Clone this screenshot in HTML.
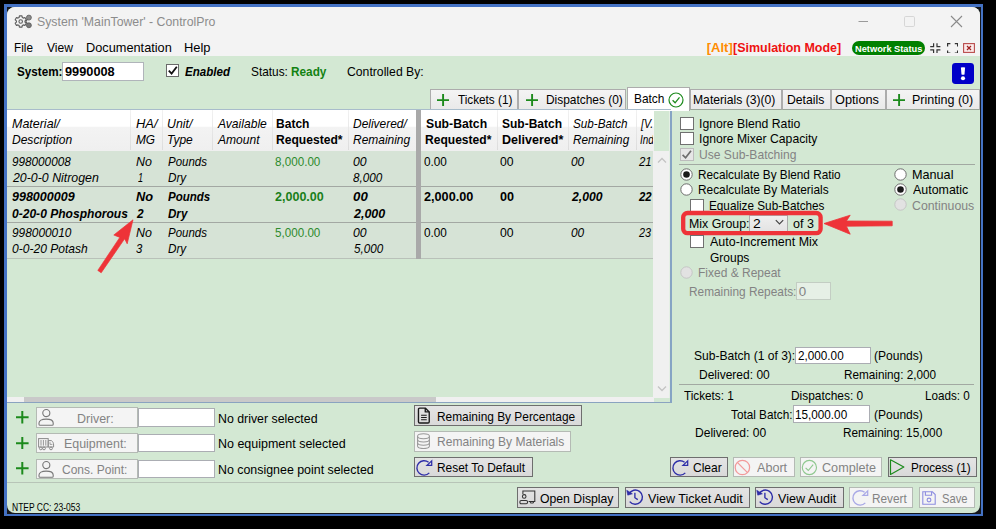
<!DOCTYPE html>
<html><head><meta charset="utf-8"><title>ControlPro</title>
<style>
html,body{margin:0;padding:0;}
body{width:996px;height:529px;background:#000;overflow:hidden;position:relative;font-family:"Liberation Sans",sans-serif;}
.b{position:absolute;box-sizing:border-box;}
.t{position:absolute;white-space:nowrap;line-height:20px;transform-origin:0 50%;color:#000;}
</style></head><body>
<div class="b" style="left:4px;top:4px;width:979px;height:512px;background:#4472c4;"></div>
<div class="b" style="left:6.5px;top:6.5px;width:974px;height:507px;background:#15171c;"></div>
<div class="b" id="win" style="left:7px;top:7px;width:973px;height:506px;background:#d3e8d3;border-radius:8px;overflow:hidden;"></div>
<div class="b" style="left:7px;top:7px;width:973px;height:49px;background:#f3f3f3;border-radius:8px 8px 0 0;"></div>
<svg class="b" style="left:14px;top:14px;" width="20" height="16" viewBox="0 0 20 16">
<g fill="none" stroke="#5e5e5e" stroke-linejoin="round">
<path d="M5.41 1.90 L7.99 1.90 L8.26 3.44 L9.44 4.12 L10.91 3.58 L12.20 5.82 L11.00 6.82 L11.00 8.18 L12.20 9.18 L10.91 11.42 L9.44 10.88 L8.26 11.56 L7.99 13.10 L5.41 13.10 L5.14 11.56 L3.96 10.88 L2.49 11.42 L1.20 9.18 L2.40 8.18 L2.40 6.82 L1.20 5.82 L2.49 3.58 L3.96 4.12 L5.14 3.44 Z" stroke-width="1.15"/>
<circle cx="6.7" cy="7.5" r="1.75" stroke-width="1.1"/>
<path d="M11.6 7.5 L13.4 5.3 M11.6 7.5 L13.4 9.7" stroke-width="1.2"/>
</g>
<circle cx="14.9" cy="3.6" r="2.45" fill="#8c8c8c" stroke="#5e5e5e" stroke-width=".9"/>
<circle cx="14.9" cy="11.3" r="2.45" fill="#7a7a7a" stroke="#5e5e5e" stroke-width=".9"/>
</svg>
<span class="t" style="left:36.88px;top:12px;font-size:12.4px;color:#8c8c8c;transform:scaleX(0.9934);">System &#x27;MainTower&#x27; - ControlPro</span>
<svg class="b" style="left:856px;top:14px;" width="110" height="14" viewBox="0 0 110 14">
<path d="M2.5 7.5 H12" stroke="#9a9a9a" stroke-width="1" fill="none"/>
<rect x="48.5" y="2.5" width="10" height="10" rx="1.2" fill="none" stroke="#d6d6d6" stroke-width="1"/>
<path d="M95 2 L106 13 M106 2 L95 13" stroke="#8a8a8a" stroke-width="1.1" fill="none"/>
</svg>
<span class="t" style="left:13.56px;top:38px;font-size:12.4px;transform:scaleX(0.9472);">File</span>
<span class="t" style="left:47.00px;top:38px;font-size:12.4px;transform:scaleX(0.9752);">View</span>
<span class="t" style="left:85.98px;top:38px;font-size:12.4px;transform:scaleX(1.0295);">Documentation</span>
<span class="t" style="left:183.97px;top:38px;font-size:12.4px;transform:scaleX(1.0392);">Help</span>
<span class="t" style="left:706.75px;top:38px;font-size:13px;font-weight:bold;color:#ff8c00;">[Alt]</span>
<span class="t" style="left:733.08px;top:38px;font-size:13px;font-weight:bold;color:#ee1111;transform:scaleX(0.9606);">[Simulation Mode]</span>
<div class="b" style="left:852px;top:40.6px;width:73px;height:14px;background:#008000;border-radius:7px;"></div>
<span class="t" style="left:854.95px;top:39px;font-size:9px;font-weight:bold;color:#fff;transform:scaleX(1.0290);">Network Status</span>
<svg class="b" style="left:930.4px;top:42.8px;" width="10.6" height="10.4" viewBox="0 0 10.6 10.4"><path d="M3.6 0.2 V3.6 H0.2 M7 0.2 V3.6 H10.4 M3.6 10.2 V6.8 H0.2 M7 10.2 V6.8 H10.4" fill="none" stroke="#333" stroke-width="1.2"/></svg>
<svg class="b" style="left:946.8px;top:42.6px;" width="11.2" height="10.8" viewBox="0 0 11.2 10.8"><path d="M0.6 3.4 V0.6 H3.4 M7.8 0.6 H10.6 V3.4 M0.6 7.4 V10.2 H3.4 M7.8 10.2 H10.6 V7.4" fill="none" stroke="#333" stroke-width="1.2"/></svg>
<svg class="b" style="left:962.6px;top:43.2px;" width="12" height="10" viewBox="0 0 12 10"><rect x=".6" y=".6" width="10.8" height="8.8" fill="#fbeaea" stroke="#b84a4a" stroke-width="1.1"/><path d="M4 3 L8 7 M8 3 L4 7" stroke="#a02020" stroke-width="1.2"/></svg>
<span class="t" style="left:16.65px;top:62px;font-size:13.33px;font-weight:bold;transform:scaleX(0.8756);">System:</span>
<div class="b" style="left:62px;top:62px;width:82px;height:18.6px;background:#fff;border:1px solid #b0b4ba;"></div>
<span class="t" style="left:64.62px;top:62px;font-size:13.33px;font-weight:bold;transform:scaleX(0.9573);">9990008</span>
<div class="b" style="left:165.6px;top:64.4px;width:13.6px;height:13px;background:#fff;border:1px solid #6a6a6a;"></div>
<svg class="b" style="left:166px;top:64px;" width="14" height="13" viewBox="0 0 14 13"><path d="M2.8 6.6 L5.6 9.6 L10.8 2.8" fill="none" stroke="#111" stroke-width="1.8"/></svg>
<span class="t" style="left:184.77px;top:62px;font-size:13.33px;font-weight:bold;font-style:italic;transform:scaleX(0.8678);">Enabled</span>
<span class="t" style="left:250.71px;top:62px;font-size:13.33px;transform:scaleX(0.8891);">Status:</span>
<span class="t" style="left:291.17px;top:62px;font-size:13.33px;font-weight:bold;color:#128212;transform:scaleX(0.8859);">Ready</span>
<span class="t" style="left:347.39px;top:62px;font-size:13.33px;transform:scaleX(0.9164);">Controlled By:</span>
<div class="b" style="left:952px;top:62.6px;width:21.7px;height:21px;background:#0000c8;border-radius:3.4px;"></div>
<svg class="b" style="left:958px;top:66px;" width="10" height="16" viewBox="0 0 10 16"><path d="M2.9 1.6 Q5 0.7 7.1 1.6 L6.5 8.6 Q5 9.1 3.5 8.6 Z" fill="#fff"/><circle cx="5" cy="12.2" r="2.05" fill="#fff"/></svg>
<div class="b" style="left:430.4px;top:89.3px;width:87.60000000000002px;height:20.4px;background:linear-gradient(#f4f4f4,#e9e9e9);border:1px solid #acacac;border-bottom-color:#9aa79a;"></div>
<div class="b" style="left:518.4px;top:89.3px;width:107.80000000000007px;height:20.4px;background:linear-gradient(#f4f4f4,#e9e9e9);border:1px solid #acacac;border-bottom-color:#9aa79a;"></div>
<div class="b" style="left:689.5px;top:89.3px;width:92.10000000000002px;height:20.4px;background:linear-gradient(#f4f4f4,#e9e9e9);border:1px solid #acacac;border-bottom-color:#9aa79a;"></div>
<div class="b" style="left:781.8px;top:89.3px;width:48.80000000000007px;height:20.4px;background:linear-gradient(#f4f4f4,#e9e9e9);border:1px solid #acacac;border-bottom-color:#9aa79a;"></div>
<div class="b" style="left:830.6px;top:89.3px;width:55.19999999999993px;height:20.4px;background:linear-gradient(#f4f4f4,#e9e9e9);border:1px solid #acacac;border-bottom-color:#9aa79a;"></div>
<div class="b" style="left:885.8px;top:89.3px;width:93.80000000000007px;height:20.4px;background:linear-gradient(#f4f4f4,#e9e9e9);border:1px solid #acacac;border-bottom-color:#9aa79a;"></div>
<div class="b" style="left:626.8px;top:86.8px;width:62.80000000000007px;height:24px;background:#fff;border:1px solid #acacac;border-bottom:none;"></div>
<svg class="b" style="left:437.2px;top:93.80000000000001px;" width="12.2" height="12.2" viewBox="0 0 12.2 12.2"><path d="M6.1 0 V12.2 M0 6.1 H12.2" stroke="#1c8a1c" stroke-width="1.9" fill="none"/></svg>
<span class="t" style="left:457.77px;top:90px;font-size:13.33px;transform:scaleX(0.8804);">Tickets (1)</span>
<svg class="b" style="left:525.6px;top:93.80000000000001px;" width="12.2" height="12.2" viewBox="0 0 12.2 12.2"><path d="M6.1 0 V12.2 M0 6.1 H12.2" stroke="#1c8a1c" stroke-width="1.9" fill="none"/></svg>
<span class="t" style="left:545.55px;top:90px;font-size:13.33px;transform:scaleX(0.8943);">Dispatches (0)</span>
<span class="t" style="left:634.05px;top:89px;font-size:13.33px;transform:scaleX(0.8934);">Batch</span>
<svg class="b" style="left:667.5px;top:91.8px;" width="16" height="16" viewBox="0 0 16 16"><circle cx="8" cy="8" r="7" fill="none" stroke="#1c8a1c" stroke-width="1.2"/><path d="M4.6 8.3 L7.1 10.8 L11.5 5.4" fill="none" stroke="#1c8a1c" stroke-width="1.3"/></svg>
<span class="t" style="left:693.33px;top:90px;font-size:13.33px;transform:scaleX(0.9117);">Materials (3)(0)</span>
<span class="t" style="left:787.02px;top:90px;font-size:13.33px;transform:scaleX(0.9155);">Details</span>
<span class="t" style="left:835.36px;top:90px;font-size:13.33px;transform:scaleX(0.9572);">Options</span>
<svg class="b" style="left:892.6px;top:93.80000000000001px;" width="12.2" height="12.2" viewBox="0 0 12.2 12.2"><path d="M6.1 0 V12.2 M0 6.1 H12.2" stroke="#1c8a1c" stroke-width="1.9" fill="none"/></svg>
<span class="t" style="left:912.00px;top:90px;font-size:13.33px;transform:scaleX(0.9397);">Printing (0)</span>
<div class="b" style="left:7px;top:109px;width:664px;height:1px;background:#a8bccb;"></div>
<div class="b" style="left:7px;top:110px;width:646.5px;height:40.5px;background:linear-gradient(#ffffff 0,#ffffff 40%,#f3f3f3 41%,#efefef 100%);"></div>
<div class="b" style="left:130.0px;top:110px;width:1px;height:40px;background:linear-gradient(#f2f2f2,#dcdcdc);"></div>
<div class="b" style="left:162.1px;top:110px;width:1px;height:40px;background:linear-gradient(#f2f2f2,#dcdcdc);"></div>
<div class="b" style="left:212.2px;top:110px;width:1px;height:40px;background:linear-gradient(#f2f2f2,#dcdcdc);"></div>
<div class="b" style="left:271.8px;top:110px;width:1px;height:40px;background:linear-gradient(#f2f2f2,#dcdcdc);"></div>
<div class="b" style="left:347.5px;top:110px;width:1px;height:40px;background:linear-gradient(#f2f2f2,#dcdcdc);"></div>
<div class="b" style="left:497.2px;top:110px;width:1px;height:40px;background:linear-gradient(#f2f2f2,#dcdcdc);"></div>
<div class="b" style="left:568.3px;top:110px;width:1px;height:40px;background:linear-gradient(#f2f2f2,#dcdcdc);"></div>
<div class="b" style="left:635.8px;top:110px;width:1px;height:40px;background:linear-gradient(#f2f2f2,#dcdcdc);"></div>
<div class="b" style="left:7px;top:150.5px;width:646.5px;height:108px;background:#d6e3d6;"></div>
<div class="b" style="left:7px;top:185.5px;width:646.5px;height:1.2px;background:#a3a8a3;"></div>
<div class="b" style="left:7px;top:221.5px;width:646.5px;height:1.2px;background:#a3a8a3;"></div>
<div class="b" style="left:7px;top:257.5px;width:646.5px;height:1.2px;background:#b9c1b9;"></div>
<div class="b" style="left:416.2px;top:110px;width:4.4px;height:148.5px;background:#a9a9a9;"></div>
<div class="b" style="left:653px;top:151px;width:17px;height:246.5px;background:#f0f0f0;"></div>
<svg class="b" style="left:657px;top:156px;" width="10" height="8" viewBox="0 0 10 8"><path d="M1 6.5 L5 2.5 L9 6.5" fill="none" stroke="#c4c4c4" stroke-width="1.3"/></svg>
<svg class="b" style="left:657px;top:384.5px;" width="10" height="8" viewBox="0 0 10 8"><path d="M1 1.5 L5 5.5 L9 1.5" fill="none" stroke="#c4c4c4" stroke-width="1.3"/></svg>
<div class="b" style="left:670.4px;top:110.5px;width:1.6px;height:292px;background:#86a4c4;"></div>
<div class="b" style="left:669.2px;top:110.5px;width:1px;height:287px;background:#e4efe4;"></div>
<div class="b" style="left:7px;top:397px;width:646.5px;height:4.8px;background:#f0f0f0;"></div>
<div class="b" style="left:24px;top:397px;width:412px;height:4.8px;background:#c9c9c9;"></div>
<div class="b" style="left:7px;top:401.6px;width:664px;height:1.2px;background:#8aa3c0;"></div>
<span class="t" style="left:12.13px;top:114px;font-size:13.33px;font-style:italic;transform:scaleX(0.9353);">Material/</span>
<span class="t" style="left:12.14px;top:130px;font-size:13.33px;font-style:italic;transform:scaleX(0.9024);">Description</span>
<span class="t" style="left:135.91px;top:114px;font-size:13.33px;font-style:italic;transform:scaleX(0.9726);">HA/</span>
<span class="t" style="left:135.95px;top:130px;font-size:13.33px;font-style:italic;transform:scaleX(0.8875);">MG</span>
<span class="t" style="left:166.94px;top:114px;font-size:13.33px;font-style:italic;transform:scaleX(0.9241);">Unit/</span>
<span class="t" style="left:166.72px;top:130px;font-size:13.33px;font-style:italic;transform:scaleX(0.8987);">Type</span>
<span class="t" style="left:218.20px;top:114px;font-size:13.33px;font-style:italic;transform:scaleX(0.9058);">Available</span>
<span class="t" style="left:218.20px;top:130px;font-size:13.33px;font-style:italic;transform:scaleX(0.9053);">Amount</span>
<span class="t" style="left:276.46px;top:114px;font-size:13.33px;font-weight:bold;transform:scaleX(0.9031);">Batch</span>
<span class="t" style="left:276.45px;top:130px;font-size:13.33px;font-weight:bold;transform:scaleX(0.9077);">Requested*</span>
<span class="t" style="left:353.24px;top:114px;font-size:13.33px;font-style:italic;transform:scaleX(0.8969);">Delivered/</span>
<span class="t" style="left:353.24px;top:130px;font-size:13.33px;font-style:italic;transform:scaleX(0.8974);">Remaining</span>
<span class="t" style="left:425.63px;top:114px;font-size:13.33px;font-weight:bold;transform:scaleX(0.9167);">Sub-Batch</span>
<span class="t" style="left:425.16px;top:130px;font-size:13.33px;font-weight:bold;transform:scaleX(0.9049);">Requested*</span>
<span class="t" style="left:502.44px;top:114px;font-size:13.33px;font-weight:bold;transform:scaleX(0.9014);">Sub-Batch</span>
<span class="t" style="left:501.92px;top:130px;font-size:13.33px;font-weight:bold;transform:scaleX(0.9401);">Delivered*</span>
<span class="t" style="left:573.25px;top:114px;font-size:13.33px;font-style:italic;transform:scaleX(0.8777);">Sub-Batch</span>
<span class="t" style="left:573.25px;top:130px;font-size:13.33px;font-style:italic;transform:scaleX(0.8815);">Remaining</span>
<div class="b" style="left:636.8px;top:110px;width:16.7px;height:148px;overflow:hidden;">
<span class="t" style="left:3.91px;top:4px;font-size:13.33px;font-style:italic;transform:scaleX(0.7985);">[V.I.]</span>
<span class="t" style="left:3.60px;top:20px;font-size:13.33px;font-style:italic;transform:scaleX(0.7440);">Index</span>
<span class="t" style="left:2.61px;top:42px;font-size:13.33px;font-style:italic;transform:scaleX(0.8584);">21</span>
<span class="t" style="left:2.03px;top:77px;font-size:13.33px;font-weight:bold;font-style:italic;transform:scaleX(0.8564);">22</span>
<span class="t" style="left:2.61px;top:113px;font-size:13.33px;font-style:italic;transform:scaleX(0.8105);">23</span>
</div>
<span class="t" style="left:12.15px;top:152px;font-size:13.33px;font-style:italic;transform:scaleX(0.8800);">998000008</span>
<span class="t" style="left:12.62px;top:168px;font-size:13.33px;font-style:italic;transform:scaleX(0.9271);">20-0-0 Nitrogen</span>
<span class="t" style="left:135.83px;top:152px;font-size:13.33px;font-style:italic;transform:scaleX(0.9347);">No</span>
<span class="t" style="left:137.73px;top:168px;font-size:13.33px;font-style:italic;transform:scaleX(0.6820);">1</span>
<span class="t" style="left:167.66px;top:152px;font-size:13.33px;font-style:italic;transform:scaleX(0.8602);">Pounds</span>
<span class="t" style="left:167.65px;top:168px;font-size:13.33px;font-style:italic;transform:scaleX(0.8784);">Dry</span>
<span class="t" style="left:275.13px;top:152px;font-size:13.33px;color:#2e8b2e;transform:scaleX(0.8739);">8,000.00</span>
<span class="t" style="left:353.31px;top:152px;font-size:13.33px;font-style:italic;transform:scaleX(0.9185);">00</span>
<span class="t" style="left:353.45px;top:168px;font-size:13.33px;font-style:italic;transform:scaleX(0.8777);">8,000</span>
<span class="t" style="left:424.03px;top:152px;font-size:13.33px;transform:scaleX(0.8826);">0.00</span>
<span class="t" style="left:500.31px;top:152px;font-size:13.33px;transform:scaleX(0.9161);">00</span>
<span class="t" style="left:571.13px;top:152px;font-size:13.33px;font-style:italic;transform:scaleX(0.8904);">00</span>
<span class="t" style="left:12.25px;top:187px;font-size:13.33px;font-weight:bold;font-style:italic;transform:scaleX(0.9385);">998000009</span>
<span class="t" style="left:12.02px;top:204px;font-size:13.33px;font-weight:bold;font-style:italic;transform:scaleX(0.9043);">0-20-0 Phosphorous</span>
<span class="t" style="left:135.94px;top:187px;font-size:13.33px;font-weight:bold;font-style:italic;transform:scaleX(0.9612);">No</span>
<span class="t" style="left:136.64px;top:204px;font-size:13.33px;font-weight:bold;font-style:italic;transform:scaleX(0.8950);">2</span>
<span class="t" style="left:167.77px;top:187px;font-size:13.33px;font-weight:bold;font-style:italic;transform:scaleX(0.8645);">Pounds</span>
<span class="t" style="left:167.77px;top:204px;font-size:13.33px;font-weight:bold;font-style:italic;transform:scaleX(0.8700);">Dry</span>
<span class="t" style="left:275.22px;top:187px;font-size:13.33px;font-weight:bold;color:#1a7f1a;transform:scaleX(0.9402);">2,000.00</span>
<span class="t" style="left:353.27px;top:187px;font-size:13.33px;font-weight:bold;font-style:italic;transform:scaleX(0.9956);">00</span>
<span class="t" style="left:354.05px;top:204px;font-size:13.33px;font-weight:bold;font-style:italic;transform:scaleX(0.9377);">2,000</span>
<span class="t" style="left:424.12px;top:187px;font-size:13.33px;font-weight:bold;transform:scaleX(0.9500);">2,000.00</span>
<span class="t" style="left:500.30px;top:187px;font-size:13.33px;font-weight:bold;transform:scaleX(0.9449);">00</span>
<span class="t" style="left:571.84px;top:187px;font-size:13.33px;font-weight:bold;font-style:italic;transform:scaleX(0.9139);">2,000</span>
<span class="t" style="left:12.14px;top:223px;font-size:13.33px;font-style:italic;transform:scaleX(0.8906);">998000010</span>
<span class="t" style="left:12.02px;top:239px;font-size:13.33px;font-style:italic;transform:scaleX(0.9051);">0-0-20 Potash</span>
<span class="t" style="left:135.83px;top:223px;font-size:13.33px;font-style:italic;transform:scaleX(0.9347);">No</span>
<span class="t" style="left:136.17px;top:239px;font-size:13.33px;font-style:italic;transform:scaleX(0.8493);">3</span>
<span class="t" style="left:167.66px;top:223px;font-size:13.33px;font-style:italic;transform:scaleX(0.8602);">Pounds</span>
<span class="t" style="left:167.65px;top:239px;font-size:13.33px;font-style:italic;transform:scaleX(0.8784);">Dry</span>
<span class="t" style="left:275.13px;top:223px;font-size:13.33px;color:#2e8b2e;transform:scaleX(0.8739);">5,000.00</span>
<span class="t" style="left:353.31px;top:223px;font-size:13.33px;font-style:italic;transform:scaleX(0.9185);">00</span>
<span class="t" style="left:353.57px;top:239px;font-size:13.33px;font-style:italic;transform:scaleX(0.8742);">5,000</span>
<span class="t" style="left:424.03px;top:223px;font-size:13.33px;transform:scaleX(0.8826);">0.00</span>
<span class="t" style="left:500.31px;top:223px;font-size:13.33px;transform:scaleX(0.9161);">00</span>
<span class="t" style="left:571.13px;top:223px;font-size:13.33px;font-style:italic;transform:scaleX(0.8904);">00</span>
<svg class="b" style="left:90px;top:210px" width="60" height="70" viewBox="90 210 60 70"><path d="M97.8 270.4 L119.8 237.4 L113.8 235.0 L133.0 219.8 L127.2 243.8 L124.6 238.8 L101.2 272.8 Z" fill="#ee3338" stroke="#ee3338" stroke-width="0.7" stroke-linejoin="round"/></svg>
<div class="b" style="left:680.3px;top:116.5px;width:13.6px;height:13px;background:#fff;border:1px solid #707070;"></div>
<span class="t" style="left:699.10px;top:114px;font-size:13.33px;transform:scaleX(0.9175);">Ignore Blend Ratio</span>
<div class="b" style="left:680.3px;top:132px;width:13.6px;height:13px;background:#fff;border:1px solid #707070;"></div>
<span class="t" style="left:699.10px;top:129px;font-size:13.33px;transform:scaleX(0.9136);">Ignore Mixer Capacity</span>
<div class="b" style="left:680.3px;top:147.5px;width:13.6px;height:13px;background:#e6e6e6;border:1px solid #bcbcbc;"></div>
<svg class="b" style="left:680.3px;top:147.5px;" width="14" height="13" viewBox="0 0 14 13"><path d="M2.6 6.8 L5.6 9.8 L11 2.8" fill="none" stroke="#6d6d6d" stroke-width="1.7"/></svg>
<span class="t" style="left:699.03px;top:145px;font-size:13.33px;color:#838383;transform:scaleX(0.9067);">Use Sub-Batching</span>
<div class="b" style="left:679.3px;top:164px;width:295.6px;height:1.2px;background:#a2a9a2;"></div>
<svg class="b" style="left:680px;top:168.3px;" width="13" height="13" viewBox="0 0 13 13"><circle cx="6.5" cy="6.5" r="5.7" fill="#fff" stroke="#666" stroke-width=".95"/><circle cx="6.5" cy="6.5" r="3.3" fill="#1a1a1a"/></svg>
<span class="t" style="left:697.96px;top:165px;font-size:13.33px;transform:scaleX(0.8833);">Recalculate By Blend Ratio</span>
<svg class="b" style="left:680px;top:183.4px;" width="13" height="13" viewBox="0 0 13 13"><circle cx="6.5" cy="6.5" r="5.7" fill="#fff" stroke="#666" stroke-width=".95"/></svg>
<span class="t" style="left:697.95px;top:180px;font-size:13.33px;transform:scaleX(0.8907);">Recalculate By Materials</span>
<svg class="b" style="left:893.6px;top:167.5px;" width="13" height="13" viewBox="0 0 13 13"><circle cx="6.5" cy="6.5" r="5.7" fill="#fff" stroke="#666" stroke-width=".95"/></svg>
<span class="t" style="left:912.09px;top:165px;font-size:13.33px;transform:scaleX(0.9485);">Manual</span>
<svg class="b" style="left:893.6px;top:183.0px;" width="13" height="13" viewBox="0 0 13 13"><circle cx="6.5" cy="6.5" r="5.7" fill="#fff" stroke="#666" stroke-width=".95"/><circle cx="6.5" cy="6.5" r="3.3" fill="#1a1a1a"/></svg>
<span class="t" style="left:913.10px;top:180px;font-size:13.33px;transform:scaleX(0.9318);">Automatic</span>
<svg class="b" style="left:893.6px;top:198.2px;" width="13" height="13" viewBox="0 0 13 13"><circle cx="6.5" cy="6.5" r="5.7" fill="#e2e2e2" stroke="#c4c4c4" stroke-width=".95"/></svg>
<span class="t" style="left:912.48px;top:196px;font-size:13.33px;color:#838383;transform:scaleX(0.9234);">Continuous</span>
<div class="b" style="left:690.2px;top:198.7px;width:13.6px;height:13px;background:#fff;border:1px solid #707070;"></div>
<span class="t" style="left:709.26px;top:196px;font-size:13.33px;transform:scaleX(0.8805);">Equalize Sub-Batches</span>
<span class="t" style="left:689.01px;top:214px;font-size:13.33px;transform:scaleX(0.9282);">Mix Group:</span>
<div class="b" style="left:748.6px;top:215px;width:39px;height:16.6px;background:linear-gradient(#efefef,#e3e3e3);border:1px solid #acacac;"></div>
<span class="t" style="left:752.90px;top:214px;font-size:13.33px;transform:scaleX(1.0437);">2</span>
<svg class="b" style="left:775.4px;top:219px;" width="9" height="7" viewBox="0 0 9 7"><path d="M0.8 1.2 L4.5 4.9 L8.2 1.2" fill="none" stroke="#444" stroke-width="1.2"/></svg>
<span class="t" style="left:793.10px;top:214px;font-size:13.33px;transform:scaleX(0.9401);">of 3</span>
<svg class="b" style="left:676px;top:206px" width="150" height="34" viewBox="676 206 150 34"><rect x="683.2" y="213.0" width="137.4" height="20.2" rx="4.3" fill="none" stroke="#ee3338" stroke-width="4.3"/></svg>
<svg class="b" style="left:820px;top:208px" width="80" height="30" viewBox="820 208 80 30"><path d="M824.0 223.5 L850.2 215.2 L846.4 221.0 L892.2 221.2 L892.2 225.8 L846.4 226.2 L850.2 234.2 Z" fill="#ee3338" stroke="#ee3338" stroke-width="0.8" stroke-linejoin="round"/></svg>
<div class="b" style="left:690.2px;top:234.6px;width:13.6px;height:13px;background:#fff;border:1px solid #707070;"></div>
<span class="t" style="left:710.20px;top:232px;font-size:13.33px;transform:scaleX(0.9347);">Auto-Increment Mix</span>
<span class="t" style="left:709.60px;top:248px;font-size:13.33px;transform:scaleX(0.9002);">Groups</span>
<svg class="b" style="left:680px;top:266.3px;" width="13" height="13" viewBox="0 0 13 13"><circle cx="6.5" cy="6.5" r="5.7" fill="#e2e2e2" stroke="#c4c4c4" stroke-width=".95"/></svg>
<span class="t" style="left:697.94px;top:263px;font-size:13.33px;color:#838383;transform:scaleX(0.9002);">Fixed &amp; Repeat</span>
<span class="t" style="left:689.05px;top:282px;font-size:13.33px;color:#838383;transform:scaleX(0.8894);">Remaining Repeats:</span>
<div class="b" style="left:796px;top:282px;width:35.2px;height:18px;background:#e6f0e6;border:1px solid #c3cdc3;"></div>
<span class="t" style="left:798.87px;top:282px;font-size:13.33px;color:#838383;">0</span>
<span class="t" style="left:693.80px;top:346px;font-size:13.33px;transform:scaleX(0.9048);">Sub-Batch (1 of 3):</span>
<div class="b" style="left:794.9px;top:346.6px;width:76.4px;height:17.6px;background:#fff;border:1px solid #abadb3;"></div>
<span class="t" style="left:797.51px;top:346px;font-size:13.33px;transform:scaleX(0.8801);">2,000.00</span>
<span class="t" style="left:873.78px;top:346px;font-size:13.33px;transform:scaleX(0.9029);">(Pounds)</span>
<span class="t" style="left:699.24px;top:365px;font-size:13.33px;transform:scaleX(0.9007);">Delivered: 00</span>
<span class="t" style="left:844.16px;top:365px;font-size:13.33px;transform:scaleX(0.8814);">Remaining: 2,000</span>
<div class="b" style="left:678.7px;top:383.5px;width:295.8px;height:1.2px;background:#a2a9a2;"></div>
<span class="t" style="left:683.67px;top:386px;font-size:13.33px;transform:scaleX(0.8794);">Tickets: 1</span>
<span class="t" style="left:790.65px;top:386px;font-size:13.33px;transform:scaleX(0.8942);">Dispatches: 0</span>
<span class="t" style="left:925.07px;top:386px;font-size:13.33px;transform:scaleX(0.8752);">Loads: 0</span>
<span class="t" style="left:731.16px;top:405px;font-size:13.33px;transform:scaleX(0.8821);">Total Batch:</span>
<div class="b" style="left:792.9px;top:405px;width:76.8px;height:18px;background:#fff;border:1px solid #abadb3;"></div>
<span class="t" style="left:795.38px;top:405px;font-size:13.33px;transform:scaleX(0.8798);">15,000.00</span>
<span class="t" style="left:873.78px;top:405px;font-size:13.33px;transform:scaleX(0.9029);">(Pounds)</span>
<span class="t" style="left:695.23px;top:423px;font-size:13.33px;transform:scaleX(0.9059);">Delivered: 00</span>
<span class="t" style="left:842.85px;top:423px;font-size:13.33px;transform:scaleX(0.8870);">Remaining: 15,000</span>
<svg class="b" style="left:16px;top:411.2px;" width="12.6" height="12.6" viewBox="0 0 12.6 12.6"><path d="M6.3 0 V12.6 M0 6.3 H12.6" stroke="#1c8a1c" stroke-width="2" fill="none"/></svg>
<div class="b" style="left:36px;top:407px;width:101.6px;height:21px;background:#f4f4f4;border:1px solid #b4bab4;"></div>
<svg class="b" style="left:38px;top:407px;" width="17" height="20" viewBox="0 0 17 20"><g fill="none" stroke="#777" stroke-width="1.1"><circle cx="8.3" cy="6.1" r="3.55"/><path d="M1 17.2 V16 C1 13.5 3.7 12.1 8.1 12.1 C12.5 12.1 15.2 13.5 15.2 16 V17.2 Q15.2 18.3 14.1 18.3 H2.1 Q1 18.3 1 17.2 Z"/></g></svg>
<span class="t" style="left:77.30px;top:409px;font-size:13.33px;color:#838383;transform:scaleX(0.9364);">Driver:</span>
<div class="b" style="left:138px;top:408.4px;width:76.6px;height:18.6px;background:#fff;border:1px solid #abadb3;"></div>
<span class="t" style="left:217.51px;top:409px;font-size:13.33px;transform:scaleX(0.9266);">No driver selected</span>
<svg class="b" style="left:16px;top:436.7px;" width="12.6" height="12.6" viewBox="0 0 12.6 12.6"><path d="M6.3 0 V12.6 M0 6.3 H12.6" stroke="#1c8a1c" stroke-width="2" fill="none"/></svg>
<div class="b" style="left:36px;top:433px;width:101.6px;height:20px;background:#f4f4f4;border:1px solid #b4bab4;"></div>
<svg class="b" style="left:37.6px;top:436.6px;" width="17" height="14" viewBox="0 0 17 14"><g fill="none" stroke="#8b8b8b" stroke-width="1"><rect x=".6" y="1.6" width="9.6" height="8.4"/><path d="M3 3 V8.6 M5.4 3 V8.6 M7.8 3 V8.6" stroke-width=".9"/><path d="M10.2 3.6 H13.4 C15 4.6 15.6 6.2 15.6 8 V10 H10.2 Z"/><path d="M12 5.2 V7.4 H14.4" stroke-width=".8"/><circle cx="2.8" cy="11.4" r="1.4"/><circle cx="6" cy="11.4" r="1.4"/><circle cx="13" cy="11.4" r="1.4"/></g></svg>
<span class="t" style="left:63.81px;top:434px;font-size:13.33px;color:#838383;transform:scaleX(0.9312);">Equipment:</span>
<div class="b" style="left:138px;top:434.4px;width:76.6px;height:17.6px;background:#fff;border:1px solid #abadb3;"></div>
<span class="t" style="left:217.50px;top:434px;font-size:13.33px;transform:scaleX(0.9362);">No equipment selected</span>
<svg class="b" style="left:16px;top:462.09999999999997px;" width="12.6" height="12.6" viewBox="0 0 12.6 12.6"><path d="M6.3 0 V12.6 M0 6.3 H12.6" stroke="#1c8a1c" stroke-width="2" fill="none"/></svg>
<div class="b" style="left:36px;top:458.6px;width:101.6px;height:20.399999999999977px;background:#f4f4f4;border:1px solid #b4bab4;"></div>
<svg class="b" style="left:38px;top:458.6px;" width="17" height="20" viewBox="0 0 17 20"><g fill="none" stroke="#777" stroke-width="1.1"><circle cx="8.3" cy="6.1" r="3.55"/><path d="M1 17.2 V16 C1 13.5 3.7 12.1 8.1 12.1 C12.5 12.1 15.2 13.5 15.2 16 V17.2 Q15.2 18.3 14.1 18.3 H2.1 Q1 18.3 1 17.2 Z"/></g></svg>
<span class="t" style="left:62.40px;top:460px;font-size:13.33px;color:#838383;transform:scaleX(0.9014);">Cons. Point:</span>
<div class="b" style="left:138px;top:460.0px;width:76.6px;height:17.99999999999998px;background:#fff;border:1px solid #abadb3;"></div>
<span class="t" style="left:217.51px;top:460px;font-size:13.33px;transform:scaleX(0.9296);">No consignee point selected</span>
<div class="b" style="left:413.8px;top:405px;width:168.2px;height:21px;background:linear-gradient(#e4e4e4,#d9d9d9);border:1px solid #6e6e6e;"></div>
<svg class="b" style="left:417px;top:407px;" width="13.6" height="17" viewBox="0 0 13 16"><g fill="none" stroke="#1a1a1a" stroke-width="1.3" stroke-linejoin="round"><path d="M2.6 .9 H7.9 L11.7 4.6 V14 Q11.7 15.2 10.5 15.2 H2.6 Q1.4 15.2 1.4 14 V2.1 Q1.4 .9 2.6 .9 Z"/><path d="M7.9 .9 V4.6 H11.7"/><path d="M3.9 7.7 H9.3 M3.9 9.9 H9.3 M3.9 12.1 H9.3" stroke-width="1.05"/></g></svg>
<span class="t" style="left:436.75px;top:407px;font-size:13.33px;transform:scaleX(0.8925);">Remaining By Percentage</span>
<div class="b" style="left:413.8px;top:431px;width:157.59999999999997px;height:21px;background:#f4f4f4;border:1px solid #b4bab4;"></div>
<svg class="b" style="left:416.4px;top:432.8px;" width="15" height="16.6" viewBox="0 0 14 16.2"><g fill="none" stroke="#9a9a9a" stroke-width="1"><ellipse cx="7" cy="3.2" rx="5.8" ry="2.4"/><path d="M1.2 3.2 V12.8 C1.2 14.2 3.8 15.2 7 15.2 C10.2 15.2 12.8 14.2 12.8 12.8 V3.2"/><path d="M1.2 6.4 C1.2 7.8 3.8 8.8 7 8.8 C10.2 8.8 12.8 7.8 12.8 6.4 M1.2 9.6 C1.2 11 3.8 12 7 12 C10.2 12 12.8 11 12.8 9.6"/></g></svg>
<span class="t" style="left:436.74px;top:432px;font-size:13.33px;color:#838383;transform:scaleX(0.9045);">Remaining By Materials</span>
<div class="b" style="left:413.8px;top:457px;width:119.19999999999999px;height:20px;background:linear-gradient(#e4e4e4,#d9d9d9);border:1px solid #6e6e6e;"></div>
<svg class="b" style="left:414.6px;top:458.6px;" width="18" height="18" viewBox="0 0 18 18"><g fill="none" stroke="#2e2ea8" stroke-width="1.35"><path d="M13.6 3.3 A7.2 7.2 0 1 0 14.3 13.9"/><path d="M16.7 1.9 V6.3 H12 Z" stroke-width="1.25" stroke-linejoin="miter"/></g></svg>
<span class="t" style="left:436.75px;top:458px;font-size:13.33px;transform:scaleX(0.8953);">Reset To Default</span>
<div class="b" style="left:7px;top:482.2px;width:973px;height:1.2px;background:#b7c4b7;"></div>
<div class="b" style="left:670px;top:457px;width:57.799999999999955px;height:20px;background:linear-gradient(#e4e4e4,#d9d9d9);border:1px solid #6e6e6e;"></div>
<svg class="b" style="left:671px;top:458.6px;" width="18" height="18" viewBox="0 0 18 18"><g fill="none" stroke="#2e2ea8" stroke-width="1.35"><path d="M13.6 3.3 A7.2 7.2 0 1 0 14.3 13.9"/><path d="M16.7 1.9 V6.3 H12 Z" stroke-width="1.25" stroke-linejoin="miter"/></g></svg>
<span class="t" style="left:693.00px;top:458px;font-size:13.33px;transform:scaleX(0.9015);">Clear</span>
<div class="b" style="left:733.2px;top:457px;width:61.799999999999955px;height:20px;background:#f4f4f4;border:1px solid #b4bab4;"></div>
<svg class="b" style="left:734.4px;top:458.6px;" width="17" height="17" viewBox="0 0 17 17"><circle cx="8.4" cy="8.5" r="7.2" fill="none" stroke="#f29a9a" stroke-width="1.25"/><path d="M3.3 3.4 L13.5 13.6" stroke="#f29a9a" stroke-width="1.25"/></svg>
<span class="t" style="left:757.00px;top:458px;font-size:13.33px;color:#838383;transform:scaleX(0.9456);">Abort</span>
<div class="b" style="left:800px;top:457px;width:82.39999999999998px;height:20px;background:#f4f4f4;border:1px solid #b4bab4;"></div>
<svg class="b" style="left:801.4px;top:458.6px;" width="17" height="17" viewBox="0 0 17 17"><circle cx="8.4" cy="8.5" r="7.1" fill="none" stroke="#8fc88f" stroke-width="1.15"/><path d="M4.6 8.8 L7.3 11.5 L12.2 5.6" fill="none" stroke="#8fc88f" stroke-width="1.15"/></svg>
<span class="t" style="left:822.17px;top:458px;font-size:13.33px;color:#838383;transform:scaleX(0.9476);">Complete</span>
<div class="b" style="left:888px;top:457px;width:88.60000000000002px;height:20px;background:linear-gradient(#e4e4e4,#d9d9d9);border:1px solid #6e6e6e;"></div>
<svg class="b" style="left:889px;top:459px;" width="16" height="16" viewBox="0 0 16 16"><path d="M1.5 0.8 L14.8 8 L1.5 15.4 Z" fill="none" stroke="#1c8a1c" stroke-width="1.2" stroke-linejoin="round"/></svg>
<span class="t" style="left:910.67px;top:458px;font-size:13.33px;transform:scaleX(0.8755);">Process (1)</span>
<div class="b" style="left:517px;top:487px;width:101.79999999999995px;height:21px;background:linear-gradient(#e4e4e4,#d9d9d9);border:1px solid #6e6e6e;"></div>
<svg class="b" style="left:519.2px;top:489.8px;" width="17" height="15" viewBox="0 0 17 15"><g fill="none" stroke="#333" stroke-width="1.05"><path d="M3.9 3.9 V1 H15.8 V11.4 H9.6"/><path d="M11.4 11.4 V13 H14.4 V11.4" stroke-width=".95"/><circle cx="5.2" cy="6.4" r="1.8"/><rect x=".9" y="10.4" width="7.6" height="3.3" rx="1.3"/></g></svg>
<span class="t" style="left:539.59px;top:489px;font-size:13.33px;transform:scaleX(0.9179);">Open Display</span>
<div class="b" style="left:624.7px;top:487px;width:124.89999999999998px;height:21px;background:linear-gradient(#e4e4e4,#d9d9d9);border:1px solid #6e6e6e;"></div>
<svg class="b" style="left:626px;top:488.4px;" width="18.6" height="18.6" viewBox="0 0 18 18"><g fill="none" stroke="#2e2ea8" stroke-width="1.35"><path d="M2.9 5.6 A6.9 6.9 0 1 1 3.6 13.2"/><path d="M.7 2.2 L1.7 6.9 L6.2 5.6 Z" fill="#2e2ea8" stroke-width=".6"/><path d="M8.6 4.6 V9.4 L11.4 11.2" stroke-width="1.3"/></g></svg>
<span class="t" style="left:648.40px;top:489px;font-size:13.33px;transform:scaleX(0.9425);">View Ticket Audit</span>
<div class="b" style="left:755px;top:487px;width:88.5px;height:21px;background:linear-gradient(#e4e4e4,#d9d9d9);border:1px solid #6e6e6e;"></div>
<svg class="b" style="left:756.2px;top:488.4px;" width="18.6" height="18.6" viewBox="0 0 18 18"><g fill="none" stroke="#2e2ea8" stroke-width="1.35"><path d="M2.9 5.6 A6.9 6.9 0 1 1 3.6 13.2"/><path d="M.7 2.2 L1.7 6.9 L6.2 5.6 Z" fill="#2e2ea8" stroke-width=".6"/><path d="M8.6 4.6 V9.4 L11.4 11.2" stroke-width="1.3"/></g></svg>
<span class="t" style="left:778.40px;top:489px;font-size:13.33px;transform:scaleX(0.9410);">View Audit</span>
<div class="b" style="left:849.2px;top:487px;width:63.59999999999991px;height:21px;background:#f4f4f4;border:1px solid #b4bab4;"></div>
<svg class="b" style="left:850.6px;top:488.6px;" width="18" height="18" viewBox="0 0 18 18"><g fill="none" stroke="#a9a9e6" stroke-width="1.35"><path d="M13.6 3.3 A7.2 7.2 0 1 0 14.3 13.9"/><path d="M16.7 1.9 V6.3 H12 Z" stroke-width="1.25" stroke-linejoin="miter"/></g></svg>
<span class="t" style="left:871.85px;top:489px;font-size:13.33px;color:#838383;transform:scaleX(0.8866);">Revert</span>
<div class="b" style="left:918.6px;top:487px;width:56.19999999999993px;height:21px;background:#f4f4f4;border:1px solid #b4bab4;"></div>
<svg class="b" style="left:921.8px;top:490.6px;" width="14" height="14" viewBox="0 0 14 14"><g fill="none" stroke="#8d8de0" stroke-width="1.1"><path d="M.8 .8 H10.4 L13.2 3.6 V13.2 H.8 Z"/><path d="M3.4 .8 V4.2 H9.6 V.8"/><circle cx="7" cy="9" r="1.9"/></g></svg>
<span class="t" style="left:942.44px;top:489px;font-size:13.33px;color:#838383;transform:scaleX(0.8397);">Save</span>
<span class="t" style="left:12.02px;top:498px;font-size:10px;transform:scaleX(0.8483);">NTEP CC: 23-053</span>
</body></html>
